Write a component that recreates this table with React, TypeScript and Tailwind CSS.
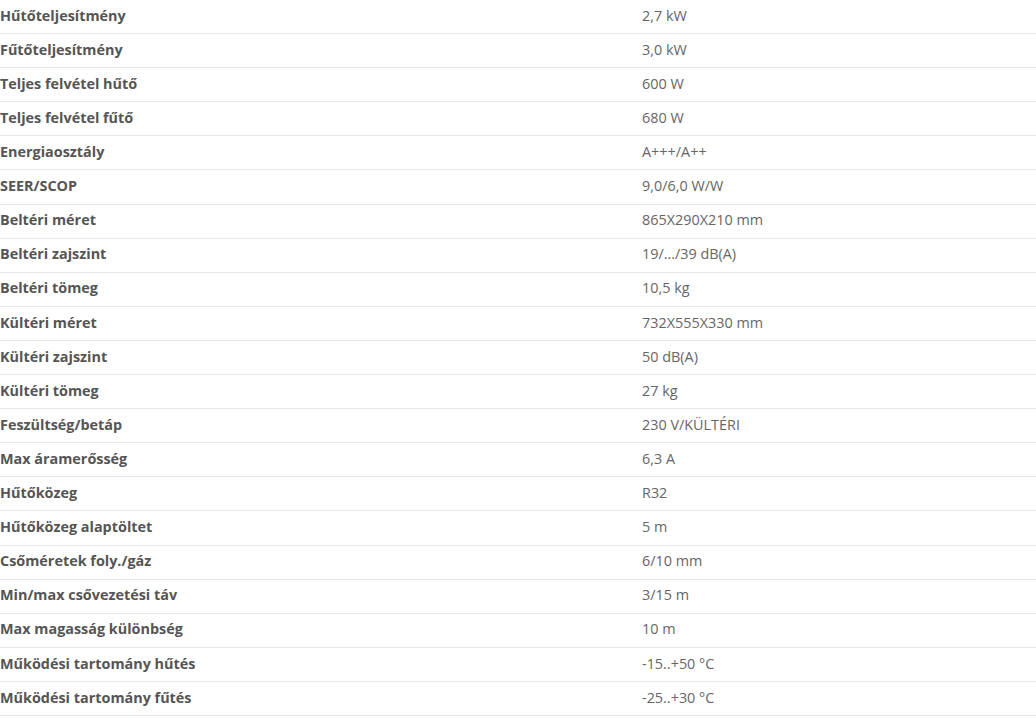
const specs = [
  ["Hűtőteljesítmény", "2,7 kW"],
  ["Fűtőteljesítmény", "3,0 kW"],
  ["Teljes felvétel hűtő", "600 W"],
  ["Teljes felvétel fűtő", "680 W"],
  ["Energiaosztály", "A+++/A++"],
  ["SEER/SCOP", "9,0/6,0 W/W"],
  ["Beltéri méret", "865X290X210 mm"],
  ["Beltéri zajszint", "19/…/39 dB(A)"],
  ["Beltéri tömeg", "10,5 kg"],
  ["Kültéri méret", "732X555X330 mm"],
  ["Kültéri zajszint", "50 dB(A)"],
  ["Kültéri tömeg", "27 kg"],
  ["Feszültség/betáp", "230 V/KÜLTÉRI"],
  ["Max áramerősség", "6,3 A"],
  ["Hűtőközeg", "R32"],
  ["Hűtőközeg alaptöltet", "5 m"],
  ["Csőméretek foly./gáz", "6/10 mm"],
  ["Min/max csővezetési táv", "3/15 m"],
  ["Max magasság különbség", "10 m"],
  ["Működési tartomány hűtés", "-15..+50 °C"],
  ["Működési tartomány fűtés", "-25..+30 °C"],
];

export default function App() {
  return (
    <div className="w-[1036px] h-[721px] overflow-hidden bg-white font-['Open_Sans',sans-serif] text-[14.4px]">
      {specs.map(([label, value]) => (
        <div
          key={label}
          className="grid grid-cols-[642px_1fr] items-center h-[34.1px] pb-[2px] border-b border-[#e6e6e6]"
        >
          <div className="font-bold text-[#555555]">{label}</div>
          <div className="text-[#666666]">{value}</div>
        </div>
      ))}
    </div>
  );
}
